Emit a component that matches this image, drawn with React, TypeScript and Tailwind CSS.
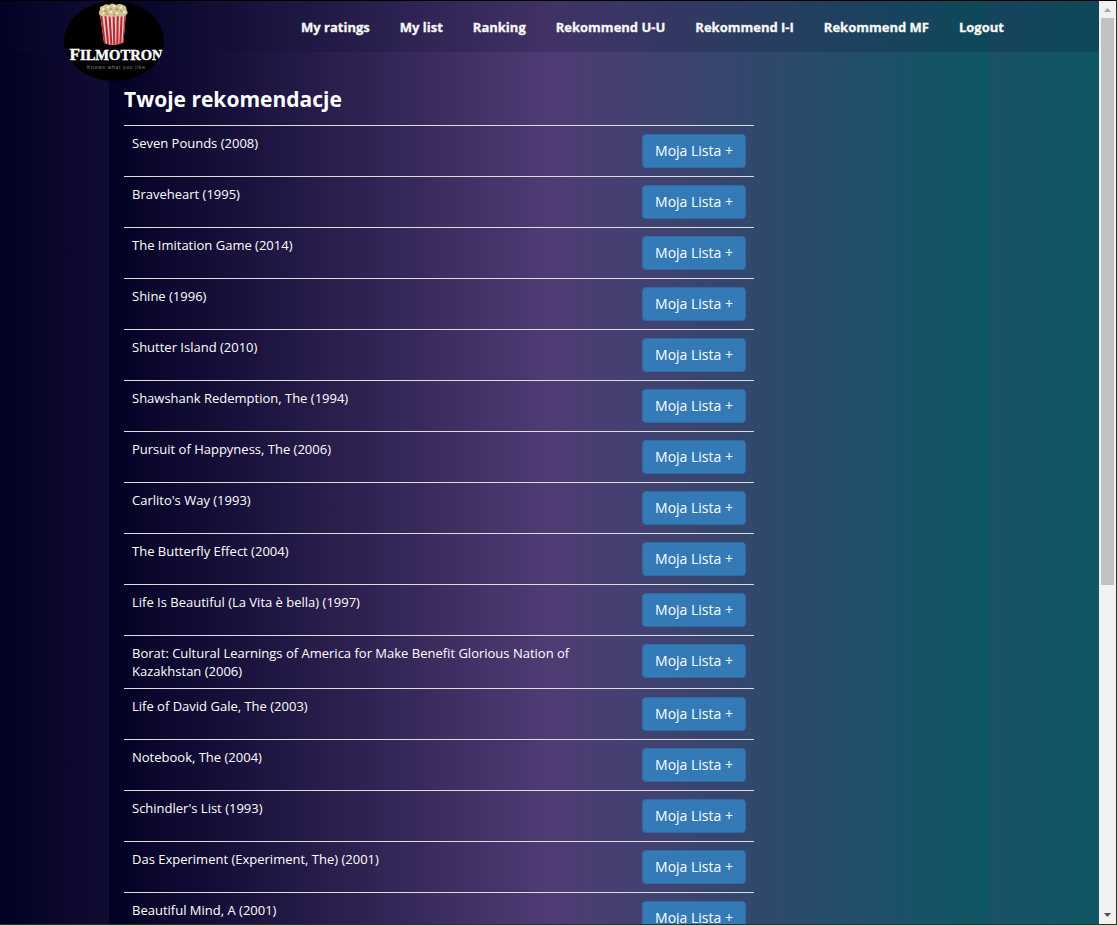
const movies = [
  "Seven Pounds (2008)",
  "Braveheart (1995)",
  "The Imitation Game (2014)",
  "Shine (1996)",
  "Shutter Island (2010)",
  "Shawshank Redemption, The (1994)",
  "Pursuit of Happyness, The (2006)",
  "Carlito's Way (1993)",
  "The Butterfly Effect (2004)",
  "Life Is Beautiful (La Vita è bella) (1997)",
  "Borat: Cultural Learnings of America for Make Benefit Glorious Nation of Kazakhstan (2006)",
  "Life of David Gale, The (2003)",
  "Notebook, The (2004)",
  "Schindler's List (1993)",
  "Das Experiment (Experiment, The) (2001)",
  "Beautiful Mind, A (2001)",
];

const links = ["My ratings", "My list", "Ranking", "Rekommend U-U", "Rekommend I-I", "Rekommend MF", "Logout"];

function Logo() {
  return (
    <svg className="absolute left-[64px] top-0 h-[80px] w-[100px]" viewBox="64 1 100 80" role="img" aria-label="Filmotron">
      <defs>
        <clipPath id="badge">
          <ellipse cx="114" cy="41" rx="50" ry="40" />
        </clipPath>
        <clipPath id="bucket">
          <path d="M99.8 13 Q113 18 126 12 L123.5 42.5 Q114 47 104 43 Z" />
        </clipPath>
      </defs>
      <g clipPath="url(#badge)">
        <rect x="64" y="1" width="100" height="80" fill="#000" />
        <g clipPath="url(#bucket)">
          <rect x="99" y="12" width="28" height="34" fill="#e3cfc8" />
          <g stroke="#bf2733" strokeWidth="2.1">
            <path d="M101 13L105 46M105.2 13L108.2 46M109.4 13L111.4 46M113.6 13L114.3 46M117.8 13L117.3 46M121.8 13L120.2 46M125.6 13L123.2 46" />
          </g>
        </g>
        <path d="M99.5 15Q98 12 100 10Q99 6 103 6Q105 3 109 5Q112 2 116 5Q120 3 123 5Q127 6 126.5 10Q129 13 126 15Q122 18 119 15.5Q116 18 112 16Q108 18 105 16Q102 17 99.5 15Z" fill="#cfc091" />
        <g fill="#efe5bf">
          <circle cx="103" cy="9" r="1.5" /><circle cx="108" cy="7" r="1.3" /><circle cx="114" cy="6" r="1.5" />
          <circle cx="121" cy="7.5" r="1.4" /><circle cx="111" cy="12" r="1.5" /><circle cx="117" cy="13" r="1.3" />
          <circle cx="103" cy="13.5" r="1.3" /><circle cx="124.5" cy="12" r="1.4" />
        </g>
        <g fill="#8e7950">
          <circle cx="105.5" cy="11" r=".9" /><circle cx="111" cy="9" r=".8" /><circle cx="117" cy="9.5" r=".9" />
          <circle cx="107" cy="14" r=".8" /><circle cx="121" cy="11" r=".8" /><circle cx="114" cy="14.5" r=".7" />
        </g>
        <text x="69.5" y="60" fill="#fff" stroke="#fff" strokeWidth=".4" fontFamily="Liberation Serif, serif" fontWeight="700" fontSize="16.5" textLength="93" lengthAdjust="spacingAndGlyphs">
          F<tspan fontSize="14">ILMOTRON</tspan>
        </text>
        <text x="87" y="68.7" fill="#858585" fontFamily="Liberation Sans, sans-serif" fontSize="5" textLength="58">Knows what you like</text>
      </g>
    </svg>
  );
}

function Scrollbar() {
  return (
    <div className="flex w-[17px] shrink-0 flex-col items-center justify-between bg-[#f1f1f1]">
      <div className="flex w-full flex-col items-center">
        <svg className="h-[17px] w-[17px]" viewBox="0 0 17 17"><path d="M5 11L8.5 7L12 11Z" fill="#a3a3a3" /></svg>
        <div className="h-[567px] w-[13px] bg-[#c1c1c1]" />
      </div>
      <svg className="h-[17px] w-[17px]" viewBox="0 0 17 17"><path d="M5 6L12 6L8.5 10Z" fill="#505050" /></svg>
    </div>
  );
}

export default function App() {
  return (
    <div className="flex h-[925px] w-[1117px] overflow-hidden border-r border-b border-t border-r-[#30302f] border-b-[#30331f] border-t-black font-['Open_Sans',sans-serif] text-[13px] leading-[18px] text-white">
      <div className="relative w-[1099px] shrink-0 overflow-hidden bg-[linear-gradient(90deg,#020024_0%,#503b74_50%,#0e5765_100%)]">
        <main className="ml-[109px] h-full w-[880px] bg-[linear-gradient(90deg,#020024_0%,#503b74_50%,#0e5765_100%)] px-[15px] pt-[83px]">
          <h1 className="h-[41px] text-[21px] leading-[30px] font-bold">Twoje rekomendacje</h1>
          <ul className="w-[630px]">
            {movies.map((title) => (
              <li key={title} className="flex items-start justify-between border-t border-[#ddd] p-2">
                <span className="w-[460px]">{title}</span>
                <button className="h-[34px] w-[104px] rounded-[4px] border border-[#2e6da4] bg-[#337ab7] text-[14px] leading-5 whitespace-nowrap">Moja Lista +</button>
              </li>
            ))}
          </ul>
        </main>
        <header className="absolute top-0 left-0 h-[51px] w-full bg-[#081032]/20">
          <nav className="flex gap-[30px] pt-[17px] pl-[301px] font-bold whitespace-nowrap text-[#f8f8f8]">
            {links.map((label) => (
              <a key={label} href="#" className="[-webkit-text-stroke:0.3px_#f8f8f8]">{label}</a>
            ))}
          </nav>
        </header>
        <Logo />
      </div>
      <Scrollbar />
    </div>
  );
}
